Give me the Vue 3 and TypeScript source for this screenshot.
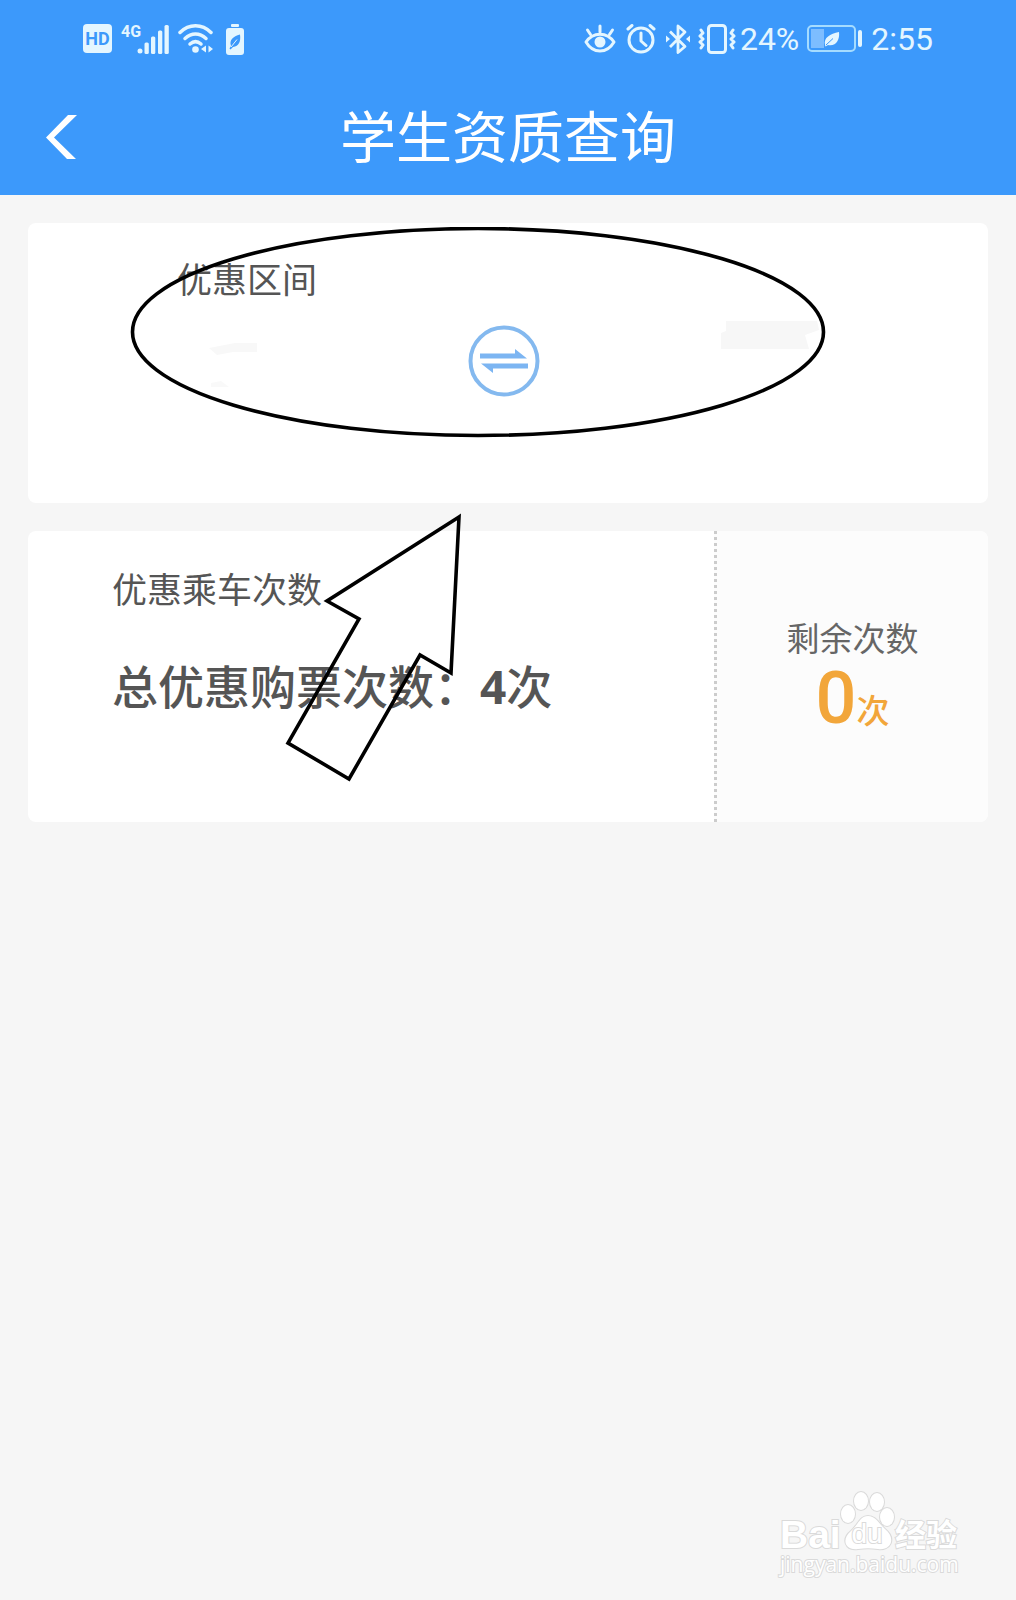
<script setup lang="ts">
import { ref } from 'vue'

const title = '学生资质查询'
const totalTimes = ref(4)
const remainingTimes = ref(0)
const reversed = ref(false)

function swapRoute(): void {
  reversed.value = !reversed.value
}
</script>

<template>
  <div class="page">
    <header class="header">
      <div class="status">
        <div class="status-group">
          <svg class="hd" width="30" height="30" viewBox="0 0 30 30" aria-label="HD">
            <rect x="0" y="0" width="29" height="29" rx="4" fill="#e4f6ff" />
            <text x="14.5" y="21" text-anchor="middle" class="hd-text">HD</text>
          </svg>
          <svg class="signal" width="49" height="32" viewBox="0 0 49 32" aria-label="4G">
            <text x="0" y="14" class="net-text">4G</text>
            <g fill="#e4f6ff">
              <circle cx="19" cy="28" r="2.5" />
              <rect x="23.500" y="19.500" width="4.300" height="11.500" rx="1.500" />
              <rect x="30" y="13.500" width="4.300" height="17.500" rx="1.500" />
              <rect x="37" y="7.500" width="4.300" height="23.500" rx="1.500" />
              <rect x="43.500" y="2" width="4.300" height="29" rx="1.500" />
            </g>
          </svg>
          <svg class="wifi" width="36" height="30" viewBox="0 0 36 30" aria-label="Wi-Fi">
            <g fill="none" stroke="#e4f6ff" stroke-width="3.500" stroke-linecap="round">
              <path d="M2 8.500C11-.5 24-.5 33 8.500" />
              <path d="M7 14.500C13.500 8.500 21.500 8.500 28 14.500" />
              <path d="M12 20C15.500 17 19.500 17 23 20" />
            </g>
            <circle cx="17.500" cy="25.500" r="3.300" fill="#e4f6ff" />
            <path d="M28 21.500v7l-5-3.500zM30.500 21.500v7l4.500-3.500z" fill="#e4f6ff" />
          </svg>
          <svg class="saver" width="18" height="31" viewBox="0 0 18 31" aria-label="省电模式">
            <rect x="5" y="0" width="8" height="3" rx="1" fill="#e4f6ff" />
            <rect x="0" y="4" width="18" height="27" rx="3" fill="#e4f6ff" />
            <path d="M14 10.500C15 17 13 22.500 7 23L4.500 25.500 3.500 24.500 5 22C3 16 7 12.500 14 10.500Z" fill="#3c99fb" />
            <path d="M5 23L11 15.500" stroke="#e4f6ff" stroke-width="1" />
          </svg>
        </div>
        <div class="status-group">
          <svg class="eye" width="32" height="30" viewBox="0 0 32 30" aria-label="护眼模式">
            <g fill="none" stroke="#e4f6ff" stroke-width="3" stroke-linecap="round" stroke-linejoin="round">
              <path d="M2 18C9 7.500 23 7.500 30 18C23 30 9 30 2 18Z" />
              <path d="M16 2v6M3.500 6l3 4.500M28.500 6l-3 4.500" />
            </g>
            <circle cx="16" cy="18" r="5.500" fill="#e4f6ff" />
          </svg>
          <svg class="alarm" width="30" height="30" viewBox="0 0 30 30" aria-label="闹钟">
            <g fill="none" stroke="#e4f6ff" stroke-width="3" stroke-linecap="round" stroke-linejoin="round">
              <circle cx="15" cy="16" r="12" />
              <path d="M15 9v8l5 4.500M2 5l4-3.500M28 5l-4-3.500" />
            </g>
          </svg>
          <svg class="bluetooth" width="24" height="31" viewBox="0 0 24 31" aria-label="蓝牙">
            <path d="M4 7.500L19 22.500 12 28.500V2L19 8 4 23" fill="none" stroke="#e4f6ff" stroke-width="2.800" stroke-linejoin="round" />
            <path d="M0 11.500l4 3.500-4 3.500zM24 11.500l-4 3.500 4 3.500z" fill="#e4f6ff" />
          </svg>
          <svg class="vibrate" width="38" height="31" viewBox="0 0 38 31" aria-label="振动">
            <g fill="none" stroke="#e4f6ff" stroke-width="3" stroke-linejoin="round" stroke-linecap="round">
              <rect x="10.500" y="1.500" width="17" height="27" rx="3" />
              <path d="M3 6l2 3-3 3 3 3-3 3 3 3-2 3M35 6l-2 3 3 3-3 3 3 3-3 3 2 3" />
            </g>
          </svg>
          <span class="percent">24%</span>
          <svg class="battery" width="56" height="28" viewBox="0 0 56 28" aria-label="电量">
            <rect x="1" y="1" width="47" height="25" rx="4" fill="none" stroke="#a5dcff" stroke-width="2" />
            <rect x="4" y="4" width="13" height="19" fill="#7dbdff" />
            <path d="M32 7C33 15 29 21.500 21 20L18.500 21.500 18 20C16.500 12.500 23 9 32 7Z" fill="#e4f6ff" />
            <path d="M19 20L26 13.500" stroke="#3c99fb" stroke-width="1" />
            <rect x="51" y="5" width="4" height="17" rx="2" fill="#e4f6ff" />
          </svg>
          <time class="clock">2:55</time>
        </div>
      </div>
      <div class="titlebar">
        <button class="back" type="button" aria-label="返回">
          <svg width="32" height="44" viewBox="0 0 32 44">
            <path d="M31 0H22L0 22.500 21 44H30L8 22.500Z" fill="#fff" />
          </svg>
        </button>
        <h1>{{ title }}</h1>
      </div>
    </header>

    <main class="content">
      <section class="card route">
        <h2 class="label">优惠区间</h2>
        <div class="swap-row">
          <button class="swap" type="button" aria-label="交换" :aria-pressed="reversed" @click="swapRoute">
            <svg width="72" height="72" viewBox="0 0 72 72">
              <circle cx="36" cy="36" r="33.500" fill="#fff" stroke="#84b9ef" stroke-width="4" />
              <path d="M12 28.500H47V24L59 33.500H12ZM60 38.500H13L25 48V43.500H60Z" fill="#7cb5f2" />
            </svg>
          </button>
        </div>
        <svg class="ring" width="700" height="214" viewBox="0 0 700 214" aria-hidden="true">
          <path d="M80 121L106 116H128V125H104L88 128Z" fill="#f8f8f8" />
          <path d="M82 160L82 156 92 154 100 160Z" fill="#f9f9f9" />
          <path d="M597 94H688L690 103 676 108 680 122H592V106L597 104Z" fill="#f7f7f7" />
          <ellipse cx="349" cy="105" rx="345.500" ry="103.500" fill="none" stroke="#000" stroke-width="3.600" />
        </svg>
      </section>

      <section class="card times">
        <div class="summary">
          <h2 class="label">优惠乘车次数</h2>
          <p class="total">总优惠购票次数：<b>{{ totalTimes }}</b>次</p>
        </div>
        <div class="remaining">
          <span class="remaining-label">剩余次数</span>
          <p class="remaining-value"><span class="num">{{ remainingTimes }}</span>次</p>
        </div>
        <svg class="arrow" width="180" height="272" viewBox="0 0 180 272" aria-hidden="true">
          <path d="M175 7L43 91 75 109 4 233 65 269 136 145 167 163Z" fill="none" stroke="#000" stroke-width="3.600" />
        </svg>
      </section>
    </main>

    <svg class="watermark" width="190" height="96" viewBox="0 0 190 96" aria-label="Baidu 经验">
      <g fill="#fff" stroke="#dadada" stroke-width="2" paint-order="stroke">
        <text x="6" y="64" class="wm-bai">Bai</text>
        <ellipse cx="74" cy="30" rx="7" ry="9" />
        <ellipse cx="87" cy="17" rx="7" ry="9" />
        <ellipse cx="103" cy="18" rx="7" ry="9" />
        <ellipse cx="113" cy="33" rx="7" ry="9" />
        <path d="M94 32C102 32 105 40 111 45C123 55 116 67 104 65C97 64 91 64 84 65C71 67 67 55 77 47C84 41 86 32 94 32Z" />
        <text x="93" y="59" text-anchor="middle" class="wm-du">du</text>
        <text x="121" y="62" class="wm-cn">经验</text>
        <text x="6" y="88" class="wm-url">jingyan.baidu.com</text>
      </g>
    </svg>
  </div>
</template>

<style>
body {
  background: #f6f6f6;
}
</style>

<style scoped>
.page {
  position: relative;
  min-height: 100vh;
  background: #f6f6f6;
  color: #555;
  font-family: Roboto, "Noto Sans CJK SC", sans-serif;
}

h1,
h2,
p {
  margin: 0;
  font-weight: 400;
}

svg {
  display: block;
  flex: none;
}

button {
  padding: 0;
  border: 0;
  background: none;
  cursor: pointer;
}

.header {
  background: #3c99fb;
  color: #fff;
}

.status {
  display: flex;
  justify-content: space-between;
  align-items: center;
  height: 78px;
  padding: 0 83px;
  color: #e4f6ff;
  font-size: 32px;
  line-height: 40px;
}

.status-group {
  display: flex;
  align-items: center;
}

.hd,
.signal,
.vibrate,
.battery,
.bluetooth,
.wifi {
  margin-right: 8px;
}

.wifi {
  margin-right: 12px;
}

.eye,
.alarm {
  margin-right: 10px;
}

.vibrate {
  margin-right: 4px;
}

.percent {
  margin-right: 8px;
}

.hd-text {
  font-size: 18px;
  font-weight: 700;
  fill: #3c99fb;
}

.net-text {
  font-size: 16px;
  font-weight: 700;
  fill: #e4f6ff;
}

.titlebar {
  display: grid;
  grid-template-columns: 78px 1fr 78px;
  align-items: center;
  height: 117px;
}

.back {
  display: flex;
  justify-content: flex-end;
}

.titlebar h1 {
  padding-top: 4px;
  font-size: 56px;
  line-height: 80px;
  text-align: center;
}

.content {
  display: flex;
  flex-direction: column;
  gap: 28px;
  padding: 28px;
}

.card {
  position: relative;
  border-radius: 8px;
  background: #fff;
}

.label {
  font-size: 35px;
  line-height: 36px;
}

.route {
  padding: 41px 28px 106px 149px;
}

.swap-row {
  display: flex;
  justify-content: center;
  margin-top: 25px;
  padding-right: 129px;
}

.ring {
  position: absolute;
  top: 4px;
  left: 101px;
  pointer-events: none;
}

.times {
  display: grid;
  grid-template-columns: 1fr 274px;
  min-height: 291px;
}

.summary {
  padding: 43px 0 40px 84px;
}

.total {
  margin-top: 52px;
  font-size: 46px;
  font-weight: 500;
  line-height: 48px;
  white-space: nowrap;
}

.total b {
  font-family: "Open Sans", sans-serif;
  font-weight: 700;
}

.remaining {
  display: flex;
  flex-direction: column;
  align-items: center;
  padding-top: 91px;
  border-left: 3px dotted #ccc;
  border-radius: 0 8px 8px 0;
  background: #fcfcfc;
}

.remaining-label {
  color: #666;
  font-size: 33px;
  line-height: 36px;
}

.remaining-value {
  color: #f2a63a;
  font-size: 33px;
  font-weight: 500;
  line-height: 82px;
}

.num {
  font-size: 72px;
}

.arrow {
  position: absolute;
  top: -21px;
  left: 256px;
  pointer-events: none;
}

.watermark {
  position: absolute;
  right: 52px;
  bottom: 20px;
}

.wm-bai {
  font: 700 39px "Liberation Sans", sans-serif;
}

.wm-du {
  font: 400 28px "Liberation Sans", sans-serif;
}

.wm-cn {
  font: 700 31px "Noto Sans CJK SC", sans-serif;
}

.wm-url {
  font: 400 21px "Open Sans", sans-serif;
}
</style>
